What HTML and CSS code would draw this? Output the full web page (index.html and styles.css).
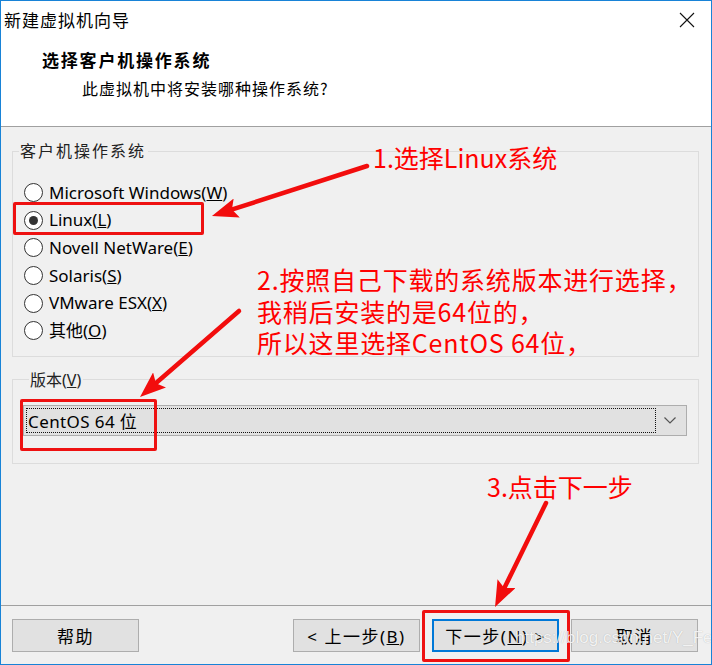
FILE: index.html
```html
<!DOCTYPE html>
<html lang="zh-CN">
<head>
    <meta charset="UTF-8">
    <title>新建虚拟机向导</title>
    <link rel="stylesheet" href="styles.css">
</head>
<body>
    <div class="window">
        <div class="titlebar">
            <span class="title">新建虚拟机向导</span>
            <svg class="close" width="16" height="16" viewBox="0 0 16 16">
                <path d="M1 1 L15 15 M15 1 L1 15" stroke="#111" stroke-width="1.1" fill="none"/>
            </svg>
        </div>
        <div class="header">
            <div class="heading">选择客户机操作系统</div>
            <div class="subtitle">此虚拟机中将安装哪种操作系统?</div>
        </div>

        <div class="content">
            <fieldset class="group os-group">
                <legend>客户机操作系统</legend>
                <div class="radio-list">
                    <label class="radio"><span class="dot"></span>Microsoft Windows(<u>W</u>)</label>
                    <label class="radio checked"><span class="dot"></span>Linux(<u>L</u>)</label>
                    <label class="radio"><span class="dot"></span>Novell NetWare(<u>E</u>)</label>
                    <label class="radio"><span class="dot"></span>Solaris(<u>S</u>)</label>
                    <label class="radio"><span class="dot"></span>VMware ESX(<u>X</u>)</label>
                    <label class="radio"><span class="dot"></span>其他(<u>O</u>)</label>
                </div>
            </fieldset>

            <fieldset class="group version-group">
                <legend>版本(<u>V</u>)</legend>
                <div class="select">
                    <div class="select-value"><span>CentOS 64 位</span></div>
                    <svg class="chevron" width="12" height="7" viewBox="0 0 12 7">
                        <path d="M0.5 0.5 L6 6 L11.5 0.5" stroke="#555" stroke-width="1.2" fill="none"/>
                    </svg>
                </div>
            </fieldset>
        </div>

        <div class="footer">
            <button class="btn">帮助</button>
            <div class="spacer"></div>
            <button class="btn">&lt; 上一步(<u>B</u>)</button>
            <button class="btn primary">下一步(<u>N</u>) &gt;</button>
            <button class="btn">取消</button>
        </div>

        <!-- annotation layer drawn over the dialog -->
        <div class="mark mark-linux"></div>
        <div class="mark mark-version"></div>
        <div class="mark mark-next"></div>

        <div class="note note-1">1.选择Linux系统</div>
        <div class="note note-2">2.按照自己下载的系统版本进行选择，<br>我稍后安装的是64位的，<br>所以这里选择CentOS 64位，</div>
        <div class="note note-3">3.点击下一步</div>

        <svg class="arrows" width="712" height="665" viewBox="0 0 712 665">
            <defs>
                <marker id="head" markerUnits="userSpaceOnUse" markerWidth="26" markerHeight="20"
                        viewBox="0 0 26 20" refX="12" refY="10" orient="auto">
                    <path d="M0 0 L26 10 L0 20 L5 10 Z" fill="#f20d0d"/>
                </marker>
            </defs>
            <line x1="367" y1="166" x2="225.3" y2="211.7" marker-end="url(#head)"/>
            <line x1="239" y1="311" x2="150.6" y2="387.8" marker-end="url(#head)"/>
            <line x1="546" y1="503" x2="501.2" y2="594.4" marker-end="url(#head)"/>
        </svg>

        <div class="watermark">https://blog.csdn.net/Y_Fei</div>
    </div>
</body>
</html>
```

FILE: styles.css
```css
* {
    box-sizing: border-box;
}
body {
    margin: 0;
    font-family: "Noto Sans", "Noto Sans CJK SC", sans-serif;
    font-size: 17px;
    color: #000;
}
.window {
    position: relative;
    width: 712px;
    height: 665px;
    border: 1px solid #1883d7;
    background-color: #f0f0f0;
    display: flex;
    flex-direction: column;
    overflow: hidden;
}
.titlebar {
    height: 36px;
    background-color: #fff;
    display: flex;
    align-items: center;
    justify-content: space-between;
    padding: 0 16px 0 3px;
}
.title {
    font-family: "Noto Sans CJK SC", sans-serif;
    font-size: 17px;
    letter-spacing: 1px;
}
.close {
    margin-top: 1px;
}
.header {
    background-color: #fff;
    padding: 12px 0 27px 41px;
    border-bottom: 1px solid #a0a0a0;
}
.heading {
    font-family: "Noto Sans CJK SC", sans-serif;
    font-weight: bold;
    font-size: 17px;
    letter-spacing: 1.8px;
    line-height: 22px;
}
.subtitle {
    font-family: "Noto Sans CJK SC", sans-serif;
    font-size: 16px;
    letter-spacing: 1px;
    line-height: 22px;
    margin-top: 6px;
    padding-left: 40px;
}
.content {
    flex: 1;
    padding: 15px 12px 0 11px;
}
.group {
    margin: 0;
    border: 1px solid #dcdcdc;
    padding: 0;
}
.group legend {
    margin-left: 6px;
    padding: 0 2px 0 1px;
    line-height: 18px;
    font-size: 16px;
    color: #222;
}
.os-group legend {
    letter-spacing: 2px;
}
.radio-list {
    padding: 19px 0 11px 11px;
}
.radio {
    display: flex;
    align-items: center;
    height: 27.6px;
    line-height: 20px;
}
.dot {
    width: 19px;
    height: 19px;
    border: 1px solid #333;
    border-radius: 50%;
    background-color: #fff;
    margin-right: 6px;
    display: flex;
    align-items: center;
    justify-content: center;
}
.radio.checked .dot::after {
    content: "";
    width: 9px;
    height: 9px;
    border-radius: 50%;
    background-color: #333;
}
.version-group {
    margin-top: 14px;
    padding: 16px 11px 27px 10px;
}
.select {
    height: 31px;
    border: 1px solid #adadad;
    background-color: #e1e1e1;
    display: flex;
    align-items: center;
    padding: 2px;
}
.select-value {
    flex: 1;
    height: 100%;
    border: 1px dotted #111;
    display: flex;
    align-items: center;
    padding-left: 1px;
    letter-spacing: 0.4px;
}
.chevron {
    margin: 0 8px 0 8px;
}
.footer {
    border-top: 1px solid #a0a0a0;
    height: 59px;
    display: flex;
    align-items: flex-start;
    padding: 13px 13px 0 11px;
    gap: 12px;
}
.spacer {
    flex: 1;
}
.btn {
    width: 127px;
    height: 33px;
    border: 1px solid #adadad;
    background-color: #e1e1e1;
    font-family: "Noto Sans", "Noto Sans CJK SC", sans-serif;
    font-size: 17px;
    letter-spacing: 1.5px;
    color: #000;
    padding: 0;
}
.btn.primary {
    border: 2px solid #0078d7;
}

/* red annotation marks */
.mark {
    position: absolute;
    border: 3px solid #ee1111;
    border-radius: 2px;
}
.mark-linux {
    left: 12px;
    top: 201px;
    width: 191px;
    height: 33px;
}
.mark-version {
    left: 19px;
    top: 398px;
    width: 137px;
    height: 52px;
}
.mark-next {
    left: 421px;
    top: 609px;
    width: 148px;
    height: 52px;
}
.note {
    position: absolute;
    color: #ff0000;
    font-family: "Noto Sans CJK SC", sans-serif;
    font-size: 25px;
    line-height: 31.5px;
    white-space: nowrap;
}
.note-1 {
    left: 372px;
    top: 141px;
}
.note-2 {
    left: 256px;
    top: 263px;
    letter-spacing: 0.8px;
}
.note-3 {
    left: 486px;
    top: 470px;
}
.arrows {
    position: absolute;
    left: -1px;
    top: -1px;
}
.arrows line {
    stroke: #f20d0d;
    stroke-width: 4.5;
    stroke-linecap: round;
}
.watermark {
    position: absolute;
    left: 514px;
    top: 627px;
    font-family: "Liberation Sans", sans-serif;
    font-size: 17px;
    color: rgba(255, 255, 255, 0.85);
    text-shadow: 0 0 1px rgba(0, 0, 0, 0.25);
}
```
